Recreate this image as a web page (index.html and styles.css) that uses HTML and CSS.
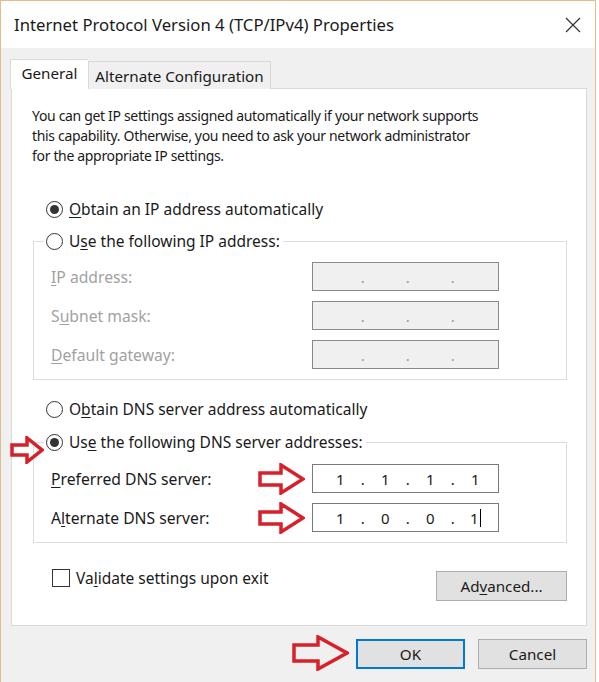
FILE: index.html
```html
<!DOCTYPE html>
<html lang="en">
<head>
    <meta charset="UTF-8">
    <title>Internet Protocol Version 4 (TCP/IPv4) Properties</title>
    <link rel="stylesheet" href="styles.css">
</head>
<body>
    <div class="window">
        <div class="titlebar">
            <span class="title">Internet Protocol Version 4 (TCP/IPv4) Properties</span>
            <svg class="close" width="16" height="16" viewBox="0 0 16 16">
                <path d="M1 1 L15 15 M15 1 L1 15" stroke="#333" stroke-width="1.2" fill="none"/>
            </svg>
        </div>

        <div class="client">
            <div class="tabs">
                <div class="tab active">General</div>
                <div class="tab">Alternate Configuration</div>
            </div>

            <div class="panel">
                <p class="intro">
                    You can get IP settings assigned automatically if your network supports<br>
                    this capability. Otherwise, you need to ask your network administrator<br>
                    for the appropriate IP settings.
                </p>

                <label class="radio checked radio-top">
                    <span class="radio-dot"></span><span><u>O</u>btain an IP address automatically</span>
                </label>

                <fieldset class="group group-ip">
                    <legend>
                        <label class="radio">
                            <span class="radio-dot"></span><span>U<u>s</u>e the following IP address:</span>
                        </label>
                    </legend>
                    <div class="row disabled">
                        <span class="row-label"><u>I</u>P address:</span>
                        <div class="ip-field"><span></span><span>.</span><span></span><span>.</span><span></span><span>.</span><span></span></div>
                    </div>
                    <div class="row disabled">
                        <span class="row-label">S<u>u</u>bnet mask:</span>
                        <div class="ip-field"><span></span><span>.</span><span></span><span>.</span><span></span><span>.</span><span></span></div>
                    </div>
                    <div class="row disabled">
                        <span class="row-label"><u>D</u>efault gateway:</span>
                        <div class="ip-field"><span></span><span>.</span><span></span><span>.</span><span></span><span>.</span><span></span></div>
                    </div>
                </fieldset>

                <label class="radio radio-dns">
                    <span class="radio-dot"></span><span>O<u>b</u>tain DNS server address automatically</span>
                </label>

                <fieldset class="group group-dns">
                    <legend>
                        <label class="radio checked">
                            <span class="radio-dot"></span><span>Us<u>e</u> the following DNS server addresses:</span>
                        </label>
                    </legend>
                    <div class="row">
                        <span class="row-label"><u>P</u>referred DNS server:</span>
                        <div class="ip-field"><span>1</span><span>.</span><span>1</span><span>.</span><span>1</span><span>.</span><span>1</span></div>
                    </div>
                    <div class="row">
                        <span class="row-label">A<u>l</u>ternate DNS server:</span>
                        <div class="ip-field"><span>1</span><span>.</span><span>0</span><span>.</span><span>0</span><span>.</span><span class="caret">1</span></div>
                    </div>
                </fieldset>

                <div class="panel-foot">
                    <label class="check">
                        <span class="check-box"></span><span>Va<u>l</u>idate settings upon exit</span>
                    </label>
                    <button class="btn btn-advanced">Ad<u>v</u>anced...</button>
                </div>
            </div>

            <div class="dialog-buttons">
                <button class="btn btn-default">OK</button>
                <button class="btn">Cancel</button>
            </div>
        </div>

        <!-- red annotation arrows -->
        <svg class="arrow arrow-radio" width="34" height="28" viewBox="0 0 34 28">
            <path d="M2 9 H17 V2 L32 14 L17 26 V19 H2 Z"/>
        </svg>
        <svg class="arrow arrow-dns1" width="47" height="32" viewBox="0 0 47 32">
            <path d="M2 10 H23 V2 L45 16 L23 30 V22 H2 Z"/>
        </svg>
        <svg class="arrow arrow-dns2" width="47" height="32" viewBox="0 0 47 32">
            <path d="M2 10 H23 V2 L45 16 L23 30 V22 H2 Z"/>
        </svg>
        <svg class="arrow arrow-ok" width="57" height="36" viewBox="0 0 57 36">
            <path d="M2 10 H26 V2 L55 18 L26 34 V26 H2 Z"/>
        </svg>
    </div>
</body>
</html>
```

FILE: styles.css
```css
* {
    margin: 0;
    padding: 0;
    box-sizing: border-box;
}

body {
    width: 599px;
    height: 682px;
    overflow: hidden;
    background: #fff;
    font-family: "Noto Sans", "Open Sans", sans-serif;
    font-size: 15.5px;
    color: #1a1a1a;
}

u {
    text-decoration-thickness: 1px;
    text-underline-offset: 2px;
}

.window {
    position: relative;
    width: 596px;
    height: 682px;
    border: 1px solid #e2bd8a;
    border-bottom: none;
    background: #f0f0f0;
    display: flex;
    flex-direction: column;
}

.titlebar {
    height: 47px;
    background: #fff;
    display: flex;
    align-items: center;
    justify-content: space-between;
    padding: 0 14px 0 13px;
}

.title {
    font-size: 16.7px;
    color: #1a1a1a;
}

.client {
    flex: 1;
    display: flex;
    flex-direction: column;
    padding: 11px 8px 0 10px;
}

/* Tabs */
.tabs {
    display: flex;
    align-items: flex-end;
    height: 30px;
    margin-bottom: -1px;
    position: relative;
    z-index: 1;
}

.tab {
    width: 183px;
    height: 28px;
    border: 1px solid #d9d9d9;
    border-bottom: none;
    background: #f0f0f0;
    display: flex;
    align-items: center;
    justify-content: center;
    font-size: 15.2px;
}

.tab.active {
    width: 78px;
    height: 30px;
    margin-left: -1px;
    background: #fff;
    border-right: none;
    padding-bottom: 3px;
}

.panel {
    height: 538px;
    background: #fff;
    border: 1px solid #d9d9d9;
    padding-top: 17px;
    display: flex;
    flex-direction: column;
}

.intro {
    margin-left: 20px;
    line-height: 20px;
    font-size: 14px;
    letter-spacing: -0.33px;
}

/* Radio buttons */
.radio {
    display: flex;
    align-items: center;
    gap: 6px;
    height: 20px;
    white-space: nowrap;
}

.radio-dot {
    width: 17px;
    height: 17px;
    border: 1px solid #333;
    border-radius: 50%;
    background: #fff;
    display: flex;
    align-items: center;
    justify-content: center;
}

.radio.checked .radio-dot::after {
    content: "";
    width: 9px;
    height: 9px;
    border-radius: 50%;
    background: #333;
}

.radio-top {
    margin: 33px 0 0 34px;
}

.radio-dns {
    margin: 19px 0 0 34px;
}

/* Group boxes */
.group {
    margin: 12px 19px 0 21px;
    border: 1px solid #dcdcdc;
    padding: 11px 67px 10px 17px;
    display: flex;
    flex-direction: column;
    gap: 10px;
}

.group-dns {
    margin-top: 13px;
    padding-top: 12px;
}

.group legend {
    margin-left: -7px;
    padding: 0 3px 0 2px;
    background: #fff;
}

.row {
    display: flex;
    align-items: center;
    justify-content: space-between;
    height: 29px;
    font-size: 15.7px;
}

.row.disabled .row-label {
    color: #a2a2a2;
}

.ip-field {
    width: 187px;
    height: 29px;
    border: 1px solid #7a7a7a;
    background: #fff;
    padding-left: 16px;
    display: grid;
    grid-template-columns: repeat(7, 22.5px);
    align-items: center;
    justify-items: center;
    font-size: 15px;
    color: #1a1a1a;
}

.row.disabled .ip-field {
    background: #f0f0f0;
    border-color: #8a8a8a;
    color: #9a9a9a;
}

.caret {
    border-right: 1px solid #000;
    padding-right: 1px;
    line-height: 18px;
}

/* Footer of the tab panel */
.panel-foot {
    margin-top: 28px;
    padding: 0 19px 0 40px;
    display: flex;
    justify-content: space-between;
    align-items: flex-start;
}

.check {
    display: flex;
    align-items: center;
    gap: 6px;
    height: 20px;
    margin-top: -3px;
}

.check-box {
    width: 18px;
    height: 18px;
    border: 1px solid #333;
    background: #fff;
}

.btn {
    width: 109px;
    height: 30px;
    border: 1px solid #adadad;
    background: #e1e1e1;
    font-family: inherit;
    font-size: 15.2px;
    color: #1a1a1a;
}

.btn-advanced {
    width: 131px;
}

.btn-default {
    border: 2px solid #0078d7;
}

.dialog-buttons {
    margin-top: 13px;
    display: flex;
    justify-content: flex-end;
    gap: 13px;
}

/* Annotation arrows */
.arrow {
    position: absolute;
}

.arrow path {
    fill: none;
    stroke: #d7202a;
    stroke-width: 3.5;
    stroke-linejoin: miter;
}

.arrow-radio {
    left: 9px;
    top: 435px;
}

.arrow-dns1 {
    left: 257px;
    top: 462px;
}

.arrow-dns2 {
    left: 257px;
    top: 501px;
}

.arrow-ok {
    left: 291px;
    top: 634px;
}
```
